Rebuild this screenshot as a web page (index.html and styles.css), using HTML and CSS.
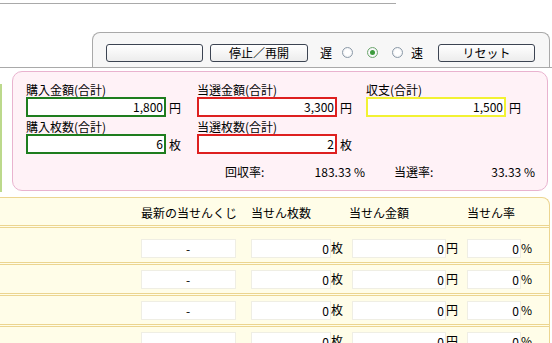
FILE: index.html
```html
<!DOCTYPE html>
<html lang="ja">
<head>
    <meta charset="UTF-8">
    <title>くじ集計</title>
    <link rel="stylesheet" href="styles.css">
</head>
<body>

<div class="topline"></div>

<div class="controls-bar">
    <div class="controls">
        <button class="btn"></button>
        <button class="btn">停止／再開</button>
        <span class="speed-label">遅</span>
        <span class="radio"></span>
        <span class="radio checked"></span>
        <span class="radio last"></span>
        <span class="speed-label fast">速</span>
        <button class="btn reset">リセット</button>
    </div>
</div>

<div class="summary-row">
    <div class="side-edge"></div>
    <div class="summary">
        <div class="summary-grid">
            <div class="field">
                <div class="field-label">購入金額(合計)</div>
                <div class="field-line"><span class="box green">1,800</span><span class="unit">円</span></div>
            </div>
            <div class="field">
                <div class="field-label">当選金額(合計)</div>
                <div class="field-line"><span class="box red">3,300</span><span class="unit">円</span></div>
            </div>
            <div class="field">
                <div class="field-label">収支(合計)</div>
                <div class="field-line"><span class="box yellow">1,500</span><span class="unit">円</span></div>
            </div>
            <div class="field second">
                <div class="field-label">購入枚数(合計)</div>
                <div class="field-line"><span class="box green">6</span><span class="unit">枚</span></div>
            </div>
            <div class="field second">
                <div class="field-label">当選枚数(合計)</div>
                <div class="field-line"><span class="box red">2</span><span class="unit">枚</span></div>
            </div>
        </div>
        <div class="rates">
            <div class="rate"><span>回収率:</span><span>183.33 %</span></div>
            <div class="rate"><span>当選率:</span><span>33.33 %</span></div>
        </div>
    </div>
</div>

<div class="results">
    <div class="results-head">
        <span>最新の当せんくじ</span>
        <span>当せん枚数</span>
        <span class="shift">当せん金額</span>
        <span>当せん率</span>
    </div>
    <div class="results-row">
        <span class="cell lot">-</span>
        <span><span class="cell count">0</span>枚</span>
        <span><span class="cell amount">0</span>円</span>
        <span><span class="cell rate-cell">0</span>%</span>
    </div>
    <div class="results-row">
        <span class="cell lot">-</span>
        <span><span class="cell count">0</span>枚</span>
        <span><span class="cell amount">0</span>円</span>
        <span><span class="cell rate-cell">0</span>%</span>
    </div>
    <div class="results-row">
        <span class="cell lot">-</span>
        <span><span class="cell count">0</span>枚</span>
        <span><span class="cell amount">0</span>円</span>
        <span><span class="cell rate-cell">0</span>%</span>
    </div>
    <div class="results-row">
        <span class="cell lot">-</span>
        <span><span class="cell count">0</span>枚</span>
        <span><span class="cell amount">0</span>円</span>
        <span><span class="cell rate-cell">0</span>%</span>
    </div>
</div>

</body>
</html>
```

FILE: styles.css
```css
html, body {
    margin: 0;
    width: 552px;
    height: 343px;
    overflow: hidden;
    background: #ffffff;
}
body {
    font-family: "Noto Sans CJK JP", "DejaVu Sans", sans-serif;
    font-size: 12px;
    color: #000000;
}

.topline {
    width: 396px;
    border-top: 1px solid #a9a9a9;
    margin-top: 3px;
}

/* control strip */
.controls-bar {
    margin-top: 28px;
    padding-left: 92px;
    padding-right: 2px;
    border-bottom: 1px solid #a9a9a9;
}
.controls {
    height: 35px;
    box-sizing: border-box;
    border: 1px solid #a9a9a9;
    border-bottom: none;
    border-radius: 8px 8px 0 0;
    background: #f7f7f7;
    display: flex;
    align-items: flex-start;
    padding: 11px 0 0 13px;
}
.btn {
    width: 97px;
    height: 18px;
    padding: 0;
    border: 1px solid #3c4452;
    border-radius: 3px;
    background: linear-gradient(#ffffff, #ececec);
    font-family: inherit;
    font-size: 12px;
    line-height: 16px;
    color: #000000;
    margin-right: 7px;
}
.btn + .btn {
    width: 98px;
    margin-right: 12px;
}
.btn.reset {
    width: 97px;
    margin-left: 15px;
    margin-right: 0;
}
.speed-label {
    line-height: 18px;
    margin-right: 10px;
}
.speed-label.fast {
    margin-left: 8px;
    margin-right: 0;
}
.radio {
    width: 11px;
    height: 11px;
    box-sizing: border-box;
    margin-top: 3px;
    margin-right: 14px;
    border: 1px solid #8c9aa8;
    border-radius: 50%;
    background: radial-gradient(circle, #ffffff 40%, #dfe3e8);
    position: relative;
}
.radio.last {
    margin-right: 0;
}
.radio.checked {
    border-color: #6fa86f;
}
.radio.checked::after {
    content: "";
    position: absolute;
    left: 2px;
    top: 2px;
    width: 5px;
    height: 5px;
    border-radius: 50%;
    background: #3d9b3d;
}

/* summary */
.summary-row {
    display: flex;
    margin-top: 3px;
}
.side-edge {
    width: 2px;
    height: 108px;
    margin-top: 13px;
    background: #bcd98c;
}
.summary {
    margin-left: 10px;
    width: 536px;
    height: 120px;
    box-sizing: border-box;
    border: 1px solid #e9b3cf;
    border-radius: 10px;
    background: #fff2f7;
    padding: 10px 0 0 13px;
}
.summary-grid {
    display: grid;
    grid-template-columns: 171px 169px 160px;
}
.field.second {
    margin-top: 2px;
}
.field-label {
    line-height: 15px;
    height: 15px;
}
.field-line {
    display: flex;
    align-items: center;
    height: 20px;
}
.box {
    width: 140px;
    height: 20px;
    box-sizing: border-box;
    border: 2px solid;
    background: #ffffff;
    text-align: right;
    padding-right: 1px;
    line-height: 16px;
}
.box.green {
    border-color: #1e7d1e;
}
.box.red {
    border-color: #de2020;
}
.box.yellow {
    border-color: #f2f233;
}
.unit {
    margin-left: 3px;
}
.rates {
    display: flex;
    margin-top: 10px;
    margin-left: 199px;
    line-height: 15px;
}
.rate {
    display: flex;
    justify-content: space-between;
    width: 140px;
}
.rate + .rate {
    margin-left: 29px;
    width: 141px;
}

/* results table */
.results {
    margin-top: 5px;
    margin-left: -10px;
    width: 560px;
    box-sizing: border-box;
    border: 1px solid #ecd590;
    border-bottom: none;
    border-radius: 0 8px 0 0;
    background: #fffde8;
    padding-left: 150px;
}
.results-head,
.results-row {
    display: grid;
    grid-template-columns: 110px 101px 115px 85px;
    margin-left: -150px;
    padding-left: 150px;
}
.results-head {
    padding-top: 8px;
    padding-bottom: 5px;
    line-height: 14px;
    border-bottom: 3px double #ecd590;
    margin-bottom: 6px;
}
.results-head .shift {
    margin-left: -3px;
}
.results-row {
    padding-top: 5px;
    padding-bottom: 4px;
    border-bottom: 3px double #ecd590;
    line-height: 17px;
}
.cell {
    display: inline-block;
    height: 19px;
    box-sizing: border-box;
    border: 1px solid #efeee4;
    background: #ffffff;
    text-align: right;
    padding-right: 1px;
    vertical-align: top;
}
.cell.lot {
    width: 95px;
    text-align: center;
}
.cell.count {
    width: 80px;
}
.cell.amount {
    width: 94px;
}
.cell.rate-cell {
    width: 54px;
}
```
